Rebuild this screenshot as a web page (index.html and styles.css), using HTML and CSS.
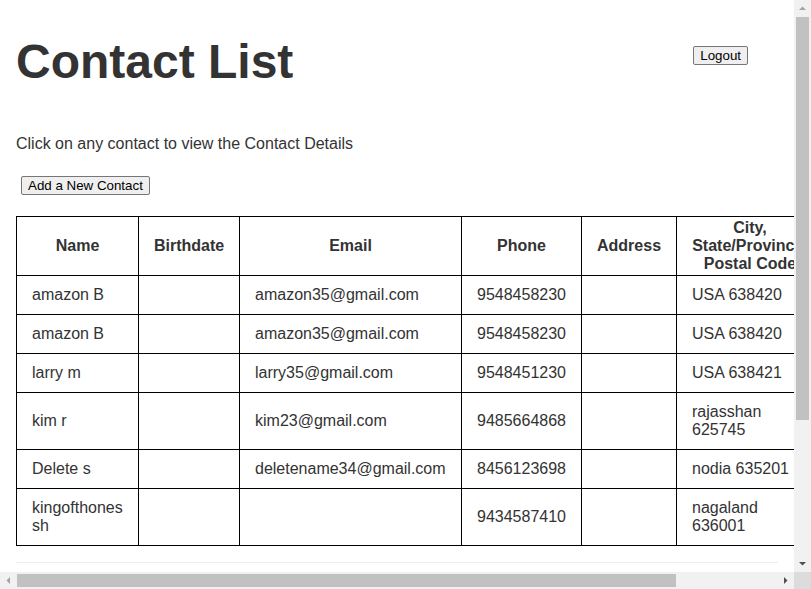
FILE: index.html
```html
<!DOCTYPE html>
<html lang="en">
<head>
<meta charset="utf-8">
<title>My Contacts</title>
<link rel="stylesheet" href="styles.css">
</head>
<body>
<div class="frame">
  <div class="viewport">
    <div class="page">
      <header class="top">
        <h1 class="title">Contact List</h1>
        <button class="btn logout" type="button">Logout</button>
      </header>
      <p class="hint">Click on any contact to view the Contact Details</p>
      <button class="btn add" type="button">Add a New Contact</button>
      <table class="contacts">
        <colgroup>
          <col class="c-name"><col class="c-birth"><col class="c-email"><col class="c-phone"><col class="c-addr"><col class="c-city"><col class="c-country">
        </colgroup>
        <thead>
          <tr>
            <th>Name</th>
            <th>Birthdate</th>
            <th>Email</th>
            <th>Phone</th>
            <th>Address</th>
            <th>City, State/Province, Postal Code</th>
            <th>Country</th>
          </tr>
        </thead>
        <tbody>
          <tr><td class="name">amazon B</td><td></td><td>amazon35@gmail.com</td><td>9548458230</td><td></td><td>USA 638420</td><td></td></tr>
          <tr><td class="name">amazon B</td><td></td><td>amazon35@gmail.com</td><td>9548458230</td><td></td><td>USA 638420</td><td></td></tr>
          <tr><td class="name">larry m</td><td></td><td>larry35@gmail.com</td><td>9548451230</td><td></td><td>USA 638421</td><td></td></tr>
          <tr><td class="name">kim r</td><td></td><td>kim23@gmail.com</td><td>9485664868</td><td></td><td>rajasshan 625745</td><td></td></tr>
          <tr><td class="name">Delete s</td><td></td><td>deletename34@gmail.com</td><td>8456123698</td><td></td><td>nodia 635201</td><td></td></tr>
          <tr><td class="name">kingofthonessh</td><td></td><td></td><td>9434587410</td><td></td><td>nagaland 636001</td><td></td></tr>
        </tbody>
      </table>
      <footer class="foot"></footer>
    </div>
  </div>
  <div class="vbar">
    <div class="sb-btn"><svg width="17" height="17" viewBox="0 0 17 17"><polygon points="5,10 12,10 8.5,6.5" fill="#a3a3a3"/></svg></div>
    <div class="vtrack"><div class="vthumb"></div></div>
    <div class="sb-btn"><svg width="17" height="17" viewBox="0 0 17 17"><polygon points="5,7 12,7 8.5,10.5" fill="#505050"/></svg></div>
  </div>
  <div class="hbar">
    <div class="sb-btn"><svg width="17" height="17" viewBox="0 0 17 17"><polygon points="10,5 10,12 6.5,8.5" fill="#a3a3a3"/></svg></div>
    <div class="htrack"><div class="hthumb"></div></div>
    <div class="sb-btn"><svg width="17" height="17" viewBox="0 0 17 17"><polygon points="7,5 7,12 10.5,8.5" fill="#505050"/></svg></div>
  </div>
  <div class="corner"></div>
</div>
</body>
</html>
```
FILE: styles.css
```css
html, body {
  margin: 0;
  padding: 0;
  overflow: hidden;
}
body {
  font-family: "Liberation Sans", Arial, sans-serif;
  font-size: 16px;
  color: #333;
  background: #fff;
}
.frame {
  display: grid;
  grid-template-columns: 794px 17px;
  grid-template-rows: 572px 17px;
  width: 811px;
  height: 589px;
}
.viewport {
  overflow: hidden;
  min-width: 0;
}
.page {
  width: 762px;
  padding: 0 16px;
}
.top {
  display: flex;
  align-items: flex-start;
  padding-top: 34px;
}
.title {
  flex: 1;
  margin: 0;
  font-size: 48px;
  line-height: 55px;
  font-weight: bold;
}
.btn {
  font-family: "Liberation Sans", Arial, sans-serif;
  font-size: 13.333px;
  color: #000;
  background: #efefef;
  border: 1px solid #767676;
  border-radius: 2px;
  padding: 1px 6px;
  line-height: 15px;
}
.logout {
  margin-top: 12px;
  margin-right: 30px;
}
.hint {
  margin: 46px 0 0;
  line-height: 18px;
}
.add {
  margin: 23px 0 0 5px;
}
.contacts {
  margin-top: 21px;
  border-collapse: collapse;
  border: 1px solid #000;
  table-layout: fixed;
  width: 899px;
}
.c-name { width: 122px; }
.c-birth { width: 101px; }
.c-email { width: 222px; }
.c-phone { width: 120px; }
.c-addr { width: 95px; }
.c-city { width: 147px; }
.c-country { width: 92px; }
.contacts th,
.contacts td {
  border: 1px solid #000;
  line-height: 18px;
  overflow: hidden;
}
.contacts th {
  padding: 2px 15px;
  font-weight: bold;
  text-align: center;
}
.contacts td {
  padding: 10px 15px;
  text-align: left;
}
.contacts td.name {
  word-break: break-all;
}
.foot {
  margin-top: 16px;
  border-top: 1px solid #eee;
  height: 200px;
}
.vbar {
  display: flex;
  flex-direction: column;
  background: #f1f1f1;
}
.hbar {
  display: flex;
  background: #f1f1f1;
}
.sb-btn {
  flex: none;
  width: 17px;
  height: 17px;
}
.sb-btn svg {
  display: block;
}
.vtrack {
  flex: 1;
}
.vthumb {
  margin: 0 2px;
  height: 403px;
  background: #c1c1c1;
}
.htrack {
  flex: 1;
  display: flex;
  align-items: center;
}
.hthumb {
  width: 659px;
  height: 13px;
  background: #c1c1c1;
}
.corner {
  background: #dcdcdc;
}
```
